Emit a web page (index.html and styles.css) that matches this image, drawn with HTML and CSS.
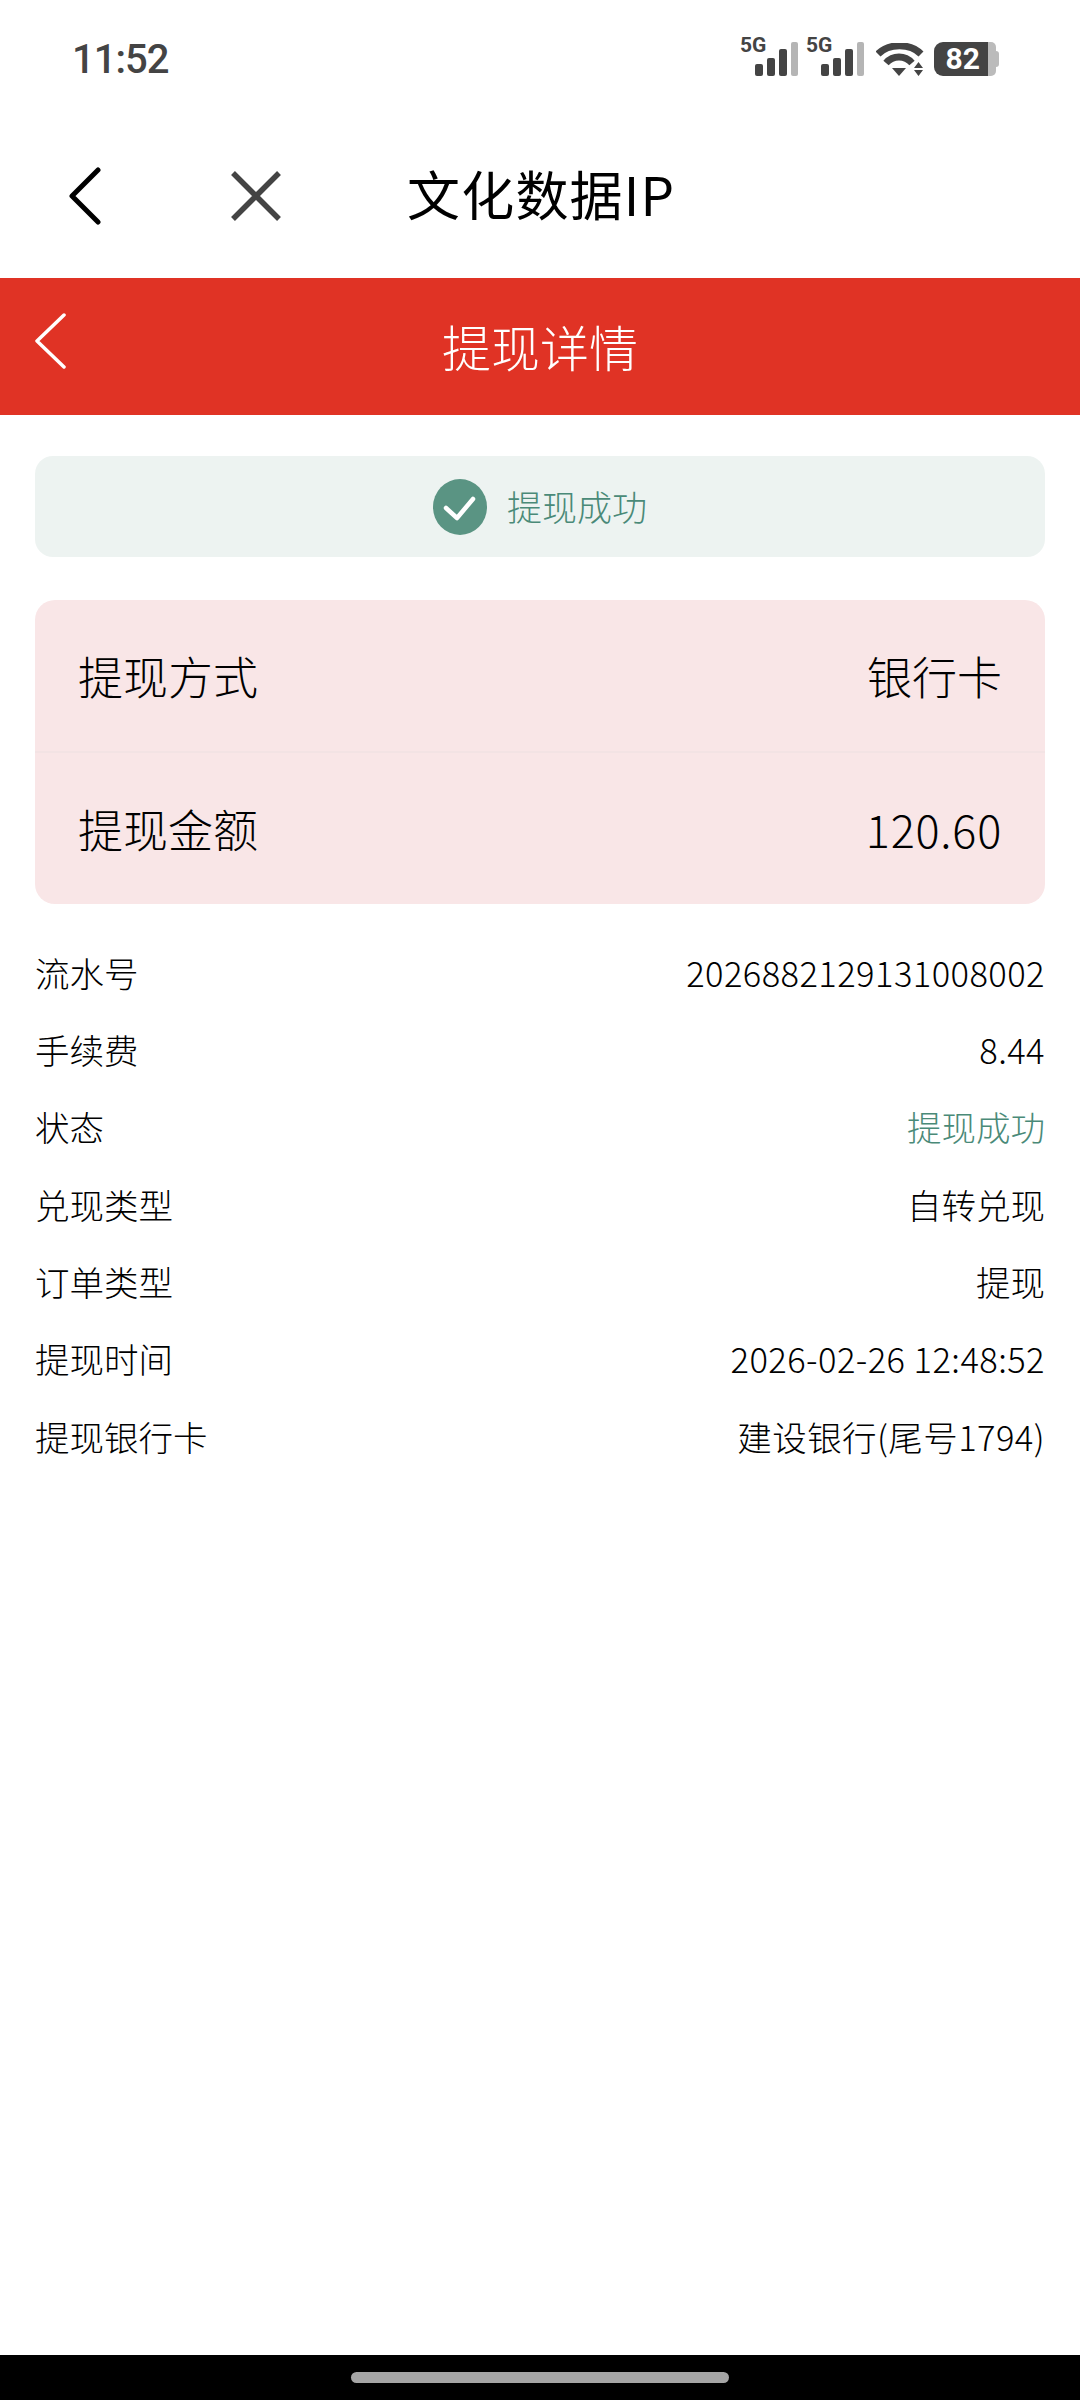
FILE: index.html
```html
<!DOCTYPE html>
<html>
<head>
	<meta charset="UTF-8">
	<title>提现详情</title>
	<link rel="stylesheet" href="styles.css">
</head>
<body>
<div class="statusbar">
	<span class="time">11:52</span>
	<div class="indicators">
		<div class="signal">
			<span class="net">5G</span>
			<svg class="bars" width="44" height="34" viewBox="0 0 44 34">
				<rect x="0" y="22" width="8" height="12" rx="2" fill="#444"/>
				<rect x="12" y="16" width="8" height="18" rx="2" fill="#444"/>
				<rect x="24" y="7" width="8" height="27" rx="2" fill="#444"/>
				<rect x="36" y="0" width="7" height="34" rx="2" fill="#b5b5b5"/>
			</svg>
		</div>
		<div class="signal">
			<span class="net">5G</span>
			<svg class="bars" width="44" height="34" viewBox="0 0 44 34">
				<rect x="0" y="22" width="8" height="12" rx="2" fill="#444"/>
				<rect x="12" y="16" width="8" height="18" rx="2" fill="#444"/>
				<rect x="24" y="7" width="8" height="27" rx="2" fill="#444"/>
				<rect x="36" y="0" width="7" height="34" rx="2" fill="#b5b5b5"/>
			</svg>
		</div>
		<svg class="wifi" width="48" height="34" viewBox="0 0 48 34">
			<path d="M2 11C13 0 34 0 45 11" fill="none" stroke="#444" stroke-width="7"/>
			<path d="M10 20C17 12 29 12 36 20" fill="none" stroke="#444" stroke-width="7"/>
			<path d="M16 25H30L23 33Z" fill="#444"/>
			<path d="M42.500 19L47 25H38Z M38 27H47L42.500 33Z" fill="#444"/>
		</svg>
		<div class="battery">
			<span class="level">82</span>
			<span class="cap"></span>
		</div>
	</div>
</div>

<div class="navbar">
	<svg class="nav-back" width="33" height="58" viewBox="0 0 33 58">
		<path d="M30 3L4 29L30 55" fill="none" stroke="#000" stroke-width="5" stroke-linecap="round" stroke-linejoin="round"/>
	</svg>
	<svg class="nav-close" width="50" height="50" viewBox="0 0 50 50">
		<path d="M2 2L48 48M48 2L2 48" fill="none" stroke="#444" stroke-width="5.500"/>
	</svg>
	<span class="nav-title">文化数据IP</span>
</div>

<div class="header">
	<svg class="header-back" width="32" height="56" viewBox="0 0 32 56">
		<path d="M30 2L3 28L30 54" fill="none" stroke="#fff" stroke-width="3.500" stroke-linecap="round" stroke-linejoin="round"/>
	</svg>
	<span class="header-title">提现详情</span>
</div>

<div class="content">
	<div class="result">
		<svg width="54" height="56" viewBox="0 0 54 56">
			<ellipse cx="27" cy="28" rx="27" ry="28" fill="#5a9483"/>
			<path d="M13 29L24 39L40 20" fill="none" stroke="#fff" stroke-width="4.500" stroke-linecap="round" stroke-linejoin="round"/>
		</svg>
		<span class="result-text">提现成功</span>
	</div>

	<div class="card">
		<div class="card-row">
			<span>提现方式</span>
			<span>银行卡</span>
		</div>
		<div class="card-row">
			<span>提现金额</span>
			<span class="amount">120.60</span>
		</div>
	</div>

	<ul class="details">
		<li><span>流水号</span><span class="num">2026882129131008002</span></li>
		<li><span>手续费</span><span class="num">8.44</span></li>
		<li><span>状态</span><span class="green">提现成功</span></li>
		<li><span>兑现类型</span><span>自转兑现</span></li>
		<li><span>订单类型</span><span>提现</span></li>
		<li><span>提现时间</span><span class="num">2026-02-26 12:48:52</span></li>
		<li><span>提现银行卡</span><span class="num">建设银行(尾号1794)</span></li>
	</ul>
</div>

<div class="homebar"><div class="pill"></div></div>
</body>
</html>
```

FILE: styles.css
```css
html{font:34px "Noto Sans CJK SC","Noto Sans",sans-serif;}
body{margin:0;height:2400px;display:flex;flex-direction:column;background:#FFF;color:#000;overflow:hidden;}

.statusbar{height:118px;box-sizing:border-box;padding:0 84px 0 72px;display:flex;justify-content:space-between;align-items:center;flex:none;}
.time{font:500 40px Roboto,sans-serif;letter-spacing:-1px;color:#444;}
.indicators{display:flex;align-items:flex-start;height:42px;margin-bottom:8px;}
.signal{position:relative;width:66px;height:42px;}
.signal .net{position:absolute;left:0;top:0;font:700 21px/22px Roboto,sans-serif;color:#444;}
.signal .bars{position:absolute;left:15px;top:8px;}
.wifi{margin:9px 10px 0 4px;}
.battery{display:flex;align-items:center;height:34px;margin-top:8px;}
.level{width:46px;height:34px;background:#444;border-radius:9px 0 0 9px;color:#FFF;font:700 30px/34px Roboto,sans-serif;text-align:right;padding-right:8px;}
.cap{position:relative;width:8px;height:34px;background:#BBB;border-radius:0 5px 5px 0;}
.cap:after{content:"";position:absolute;left:8px;top:9px;width:3px;height:16px;background:#BBB;border-radius:0 3px 3px 0;}

.navbar{height:160px;box-sizing:border-box;padding:0 0 4px 68px;flex:none;display:flex;align-items:center;}
.nav-close{margin-left:130px;}
.nav-title{margin:0 0 6px 126px;font-size:53px;line-height:60px;letter-spacing:1.200px;}

.header{position:relative;height:137px;box-sizing:border-box;padding-bottom:3px;flex:none;background:#E03325;display:flex;justify-content:center;align-items:center;}
.header-back{position:absolute;left:34px;top:35px;}
.header-title{color:#FFF;font-size:49px;font-weight:300;}

.content{padding:41px 35px 0;}
.result{height:101px;box-sizing:border-box;padding-bottom:2px;background:#EDF3F1;border-radius:18px;display:flex;justify-content:center;align-items:center;gap:20px;}
.result svg{margin-top:2px;}
.result-text{color:#4A8A78;font-size:35px;font-weight:300;}

.card{margin-top:43px;height:304px;background:#F9E6E7;border-radius:20px;padding:0 43px;display:flex;flex-direction:column;}
.card-row{flex:1;display:flex;justify-content:space-between;align-items:center;font-size:45px;font-weight:300;}
.card-row+.card-row{margin:0 -43px;padding:0 43px;border-top:2px solid #F3E3E4;}
.amount{letter-spacing:.750px;}

.details{list-style:none;margin:29px 0 0;padding:0;}
.details li{height:77.330px;display:flex;justify-content:space-between;align-items:center;font-size:34.500px;font-weight:300;}
.num{letter-spacing:.430px;}
.green{color:#4A8A78;}

.homebar{margin-top:auto;height:45px;flex:none;background:#000;display:flex;justify-content:center;align-items:center;}
.pill{width:378px;height:11px;background:#A5A5A5;border-radius:6px;}
```
